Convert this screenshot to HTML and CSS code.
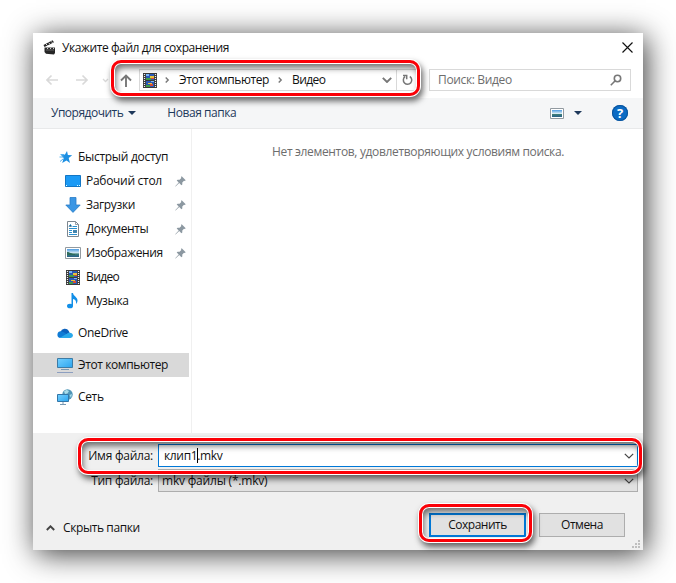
FILE: index.html
```html
<!DOCTYPE html>
<html lang="ru">
<head>
<meta charset="utf-8">
<title>Укажите файл для сохранения</title>
<link rel="stylesheet" href="styles.css">
</head>
<body>
<svg width="0" height="0" class="defs">
  <defs>
    <linearGradient id="sky" x1="0" y1="0" x2="0" y2="1"><stop offset="0" stop-color="#4b9ae0"/><stop offset=".5" stop-color="#d9ecf5"/><stop offset=".6" stop-color="#3f7f76"/><stop offset="1" stop-color="#27608a"/></linearGradient>
    <linearGradient id="screen" x1="0" y1="0" x2="1" y2="1"><stop offset="0" stop-color="#74d0ff"/><stop offset="1" stop-color="#2ba4ee"/></linearGradient>
    <symbol id="film" viewBox="0 0 14 15"><path fill="#3b3b3b" d="M0 0h14v15H0z"/><path stroke="#f2f2f2" stroke-width="1.2" stroke-dasharray="1 1" d="M1.500 1v14M12.500 1v14"/><path fill="#2a59b8" d="M3 1h8v6H3zM3 8h8v6H3z"/><path fill="#e9c13a" d="M7 3h4v2H7zM5 10h4v1H5z"/><path fill="#d94b30" d="M8 5h3v1H8zM7 11h3v2H7z"/><path fill="#3f9b49" d="M3 5h5v2H3zM3 12h4v2H3z"/><path fill="#7bb6f3" d="M3 1h3v2H3zM8 8h3v1H8z"/></symbol>
    <symbol id="photo" viewBox="0 0 16 12"><path fill="#fff" stroke="#929aa0" d="M.5.5h15v11H.5z"/><path fill="url(#sky)" d="M2 2h12v8H2z"/><path fill="#2f6c5b" d="M2 5c3 0 4 2 8 2v1H2z"/></symbol>
    <symbol id="pin" viewBox="0 0 11 11"><path fill="#8c98a1" d="M6.700.3 10.700 4.300 9.800 5 9 4.700 7.300 6.500 7.300 8.400 6.400 9.300 4.200 7.100.6 10.600.2 10.300 3.700 6.600 1.700 4.500 2.600 3.700 4.600 3.700 6.300 2 6 1.100z"/></symbol>
  </defs>
</svg>
<main class="dialog">
  <header class="title">
    <svg class="clap" viewBox="0 0 13 15"><path fill="#262626" d="M1.500 7.500H12V13l-1 1.500-8-.8L1.500 12zM.5 5 9.500.2l1.500 2L1.500 7z"/><path stroke="#ddd" d="m3 4 1.500 1.500M5.500 2.700 7 4.200M8 1.300l1.500 1.500M5 7.700l-.7 1.300M8 7.700 7.300 9M11 7.700l-.7 1.300"/><path stroke="#666" d="M3 10h8"/></svg>
    <h1 class="t-title">Укажите файл для сохранения</h1>
    <svg class="close" viewBox="0 0 11 11"><path fill="none" stroke="#111" stroke-width="1.150" d="m.5.5 10 10m0-10-10 10"/></svg>
  </header>
  <nav class="nav">
    <svg class="arrows" viewBox="0 0 70 12"><path fill="none" stroke="#d9d9d9" stroke-width="1.700" d="M12 6H1m4.500-4.500L1 6l4.500 4.500M30 6h11m-4.500-4.500L41 6l-4.500 4.500"/><path fill="none" stroke="#d9d9d9" stroke-width="1.300" d="m57 5 2.500 2.500L62 5"/></svg>
    <svg class="up" viewBox="0 0 12 13"><path fill="none" stroke="#777" stroke-width="1.900" d="M6 13V2M1 6.500l5-5 5 5"/></svg>
    <div class="address">
      <svg class="film"><use href="#film"/></svg>
      <svg class="chev c1" viewBox="0 0 4 6"><path d="m.7.5 2.500 2.500L.7 5.500"/></svg>
      <span class="t-pc">Этот компьютер</span>
      <svg class="chev c2" viewBox="0 0 4 6"><path d="m.7.5 2.500 2.500L.7 5.500"/></svg>
      <span class="t-video">Видео</span>
      <svg class="drop" viewBox="0 0 10 6"><path d="m.8.8 4.200 4.200L9.200.8"/></svg>
      <span class="refresh"><svg viewBox="0 0 11 12"><path fill="none" stroke="#777" stroke-width="1.500" d="M7.800 2.500A4.200 4.200 0 1 1 3 2.700M1 1.500h3.700v3.700"/></svg></span>
    </div>
    <div class="search"><span class="t-search">Поиск: Видео</span>
      <svg viewBox="0 0 12 12"><circle cx="7.500" cy="4.500" r="3.200"/><path d="M5.200 6.800.8 11.200"/></svg>
    </div>
  </nav>
  <div class="toolbar">
    <span class="t-org">Упорядочить</span><i class="tri"></i>
    <span class="t-new">Новая папка</span>
    <svg class="view" viewBox="0 0 14 11"><path fill="#fff" stroke="#929aa0" d="M.5.5h13v10H.5z"/><path fill="url(#sky)" d="M2 2h10v7H2z"/></svg><i class="tri t2"></i>
    <b class="help">?</b>
  </div>
  <section class="content">
    <ul class="tree">
      <li><svg class="ic" viewBox="0 0 16 16"><path fill="#1c8fe2" d="M10 2l.9 4.100 4.300.2-3.500 2.700 1.300 5L9.500 11.500 5.200 14.100l1.500-5-2.700-2.900 3.700-.1z"/><path stroke="#55b2f0" d="M3.500 5.500h4M2.500 8h4M3 12.500 6 10"/></svg><span class="t-quick">Быстрый доступ</span></li>
      <li class="sub"><svg class="ic" viewBox="0 0 16 16"><path fill="#1b9af5" stroke="#1376c4" d="M.5 2.500h15v11H.5z"/><path stroke="#dff" stroke-dasharray="1 10 1 1" d="M1 12.500h14"/></svg><span class="t-desk">Рабочий стол</span><svg class="pin"><use href="#pin"/></svg></li>
      <li class="sub"><svg class="ic" viewBox="0 0 16 16"><path fill="#3a96e4" stroke="#287cc6" stroke-width=".8" d="M5 .5h6v7.500h4.200L8 15.400.8 8H5z"/></svg><span class="t-down">Загрузки</span><svg class="pin"><use href="#pin"/></svg></li>
      <li class="sub"><svg class="ic" viewBox="0 0 16 16"><path fill="#fff" stroke="#7d8790" d="M2.500.5h8l3 3v12h-11z"/><path fill="none" stroke="#7d8790" stroke-width=".8" d="M10.500.5v3h3"/><path stroke="#2a90cf" d="M7.500 5.500H12M4 7.500h8M4 9.500h3M4 11.500h3M4 13.500h8M4 5.500l1.500-2 1 2"/><path fill="#4385ae" d="M8 9h4v3H8z"/></svg><span class="t-docs">Документы</span><svg class="pin"><use href="#pin"/></svg></li>
      <li class="sub"><svg class="ic pic"><use href="#photo"/></svg><span class="t-img">Изображения</span><svg class="pin"><use href="#pin"/></svg></li>
      <li class="sub"><svg class="ic vid"><use href="#film"/></svg><span class="t-vid2">Видео</span></li>
      <li class="sub"><svg class="ic" viewBox="0 0 16 16"><ellipse cx="5" cy="13" rx="3" ry="2.300" fill="#128fe8"/><path fill="#128fe8" d="M6.500 0H8c.2 3 4.500 4 4.500 7.500 0 1.500-.6 2.500-1.500 3.500.6-3-.8-4.500-3-5v7H6.500z"/></svg><span class="t-music">Музыка</span></li>
      <li class="gap"><svg class="ic" viewBox="0 0 16 16"><path fill="#0c62bd" d="M3.500 7a4.500 4.500 0 0 1 8.300-1L13 9l-8 2z"/><path fill="#0f7bd5" d="M3.800 6.300c3 .2 5 2.500 7.500 4.200L3 13A3.400 3.400 0 0 1 3.800 6.300z"/><path fill="#29a8ea" d="M2.500 13 11 8c2.500-1 5 .3 5 2.600A2.600 2.600 0 0 1 13.300 13z"/></svg><span class="t-one">OneDrive</span></li>
      <li class="gap sel"><svg class="ic" viewBox="0 0 16 16"><path fill="url(#screen)" stroke="#3d7ba5" d="M.5 1.500h15v9H.5z"/><path stroke="#7898b2" d="M4 12.500h8"/><path stroke="#8d9fc0" d="M0 15.500h16"/></svg><span class="t-pc2">Этот компьютер</span></li>
      <li class="gap"><svg class="ic" viewBox="0 0 16 16"><circle cx="10.500" cy="5.500" r="5.200" fill="#4f95b7"/><path fill="#a9dcea" d="M7 2.500 9.500.7 12 2l-1.500 2.500L8 5zM12.500 6l2.500-1-1 4z"/><path fill="url(#screen)" stroke="#3276a8" d="M.5 5.500h11v7H.5z"/><path stroke="#7898b2" d="M3 15.500h6M6 13v2"/></svg><span class="t-net">Сеть</span></li>
    </ul>
    <p class="empty"><span class="t-empty">Нет элементов, удовлетворяющих условиям поиска.</span></p>
  </section>
  <footer class="foot">
    <div class="row name"><label class="t-name">Имя файла:</label><div class="field"><span class="t-file">клип1<i class="caret"></i>.mkv</span><svg viewBox="0 0 10 6"><path d="m.8.800 4.200 4.200L9.200.8"/></svg></div></div>
    <div class="row type"><label class="t-type">Тип файла:</label><div class="field"><span class="t-mkv">mkv файлы (*.mkv)</span><svg viewBox="0 0 10 6"><path d="m.8.800 4.200 4.200L9.200.8"/></svg></div></div>
    <div class="actions">
      <svg class="hide" viewBox="0 0 9 6"><path fill="none" stroke="#444" stroke-width="1.900" d="m.8 5 3.700-3.700L8.200 5"/></svg><span class="t-hide">Скрыть папки</span>
      <button class="save"><span class="t-save">Сохранить</span></button><button class="cancel"><span class="t-cancel">Отмена</span></button>
    </div>
    <svg class="grip" viewBox="0 0 8 8"><path fill="#bfbfbf" d="M6 0h2v2H6zM3 3h2v2H3zM6 3h2v2H6zM0 6h2v2H0zM3 6h2v2H3zM6 6h2v2H6z"/></svg>
  </footer>
</main>
<div class="ring r1"></div><div class="ring r2"></div><div class="ring r3"></div>
</body>
</html>
```
FILE: styles.css
```css
* { box-sizing: border-box; }
body { margin: 0; padding: 33px; width: 676px; height: 583px; overflow: hidden; position: relative; background: #fff; font: 12px/16px "Open Sans", "Noto Sans", sans-serif; letter-spacing: -.35px; color: #111; }
.defs { position: absolute; }
svg { display: block; flex: none; }
span, label { white-space: nowrap; }
.dialog { width: 610px; height: 517px; background: #fff; display: flex; flex-direction: column; box-shadow: 3px 4px 28px rgba(0,0,0,.78); }
.title { height: 29px; display: flex; align-items: center; padding: 0 10px; }
.title h1 { margin: 0 auto 0 6px; font-size: 12px; font-weight: 400; white-space: nowrap; letter-spacing: -.41px; }
.clap { width: 13px; height: 15px; }
.close { width: 11px; height: 11px; }
.nav { height: 36px; display: flex; align-items: center; padding: 0 12px 0 13px; }
.arrows { width: 70px; height: 12px; }
.up { width: 12px; height: 13px; margin-left: 4px; }
.address { margin-left: 7px; width: 279px; height: 22px; border: 1px solid #d9d9d9; display: flex; align-items: center; padding-left: 3px; }
.film { width: 14px; height: 15px; }
.chev { width: 4px; height: 6px; overflow: visible; }
.chev path, .drop path { fill: none; stroke: #777; stroke-width: 1.4; }
.c1 { margin: 0 10px 0 8px; }
.c2 { margin: 0 10px 0 9px; }
.t-pc, .t-pc2 { letter-spacing: -.4px; }
.t-video, .t-vid2 { letter-spacing: -.6px; }
.drop { width: 10px; height: 6px; margin-left: auto; }
.drop path { stroke-width: 1.9; }
.refresh { width: 21px; height: 20px; margin-left: 4px; border-left: 1px solid #d9d9d9; display: flex; align-items: center; padding-left: 5px; }
.refresh svg { width: 11px; height: 12px; }
.search { margin-left: auto; width: 202px; height: 22px; border: 1px solid #d9d9d9; display: flex; align-items: center; justify-content: space-between; padding: 0 8px; color: #6d6d6d; }
.search svg { width: 12px; height: 12px; fill: none; stroke: #777; stroke-width: 1.6; }
.toolbar { height: 31px; background: #f5f6f7; border-bottom: 1px solid #e8e9ea; display: flex; align-items: center; padding: 0 15px 0 18px; color: #1e395b; }
.tri { border: 4px solid transparent; border-top-color: #1e395b; border-bottom: 0; margin-left: 5px; }
.t-org { letter-spacing: -.5px; }
.t-new { margin: 0 auto 0 31px; letter-spacing: -.45px; }
.view { width: 14px; height: 11px; }
.t2 { margin: 0 30px 0 10px; }
.help { width: 16px; height: 16px; border-radius: 50%; background: #0b6bc4; box-shadow: inset 0 0 0 1px #0a549c; color: #fff; text-align: center; font-size: 13px; line-height: 16px; }
.content { height: 304px; display: flex; }
.tree { list-style: none; margin: 0; padding: 16px 0 0; width: 159px; border-right: 1px solid #f0f0f0; }
.tree li { height: 24px; display: flex; align-items: center; padding-left: 24px; width: 156px; }
.tree .sub { padding-left: 32px; }
.tree .gap { margin-top: 8px; }
.tree .sel { background: #d9d9d9; }
.t-quick, .t-desk { letter-spacing: -.29px; }
.ic { width: 16px; height: 16px; margin-right: 5px; }
.pic { height: 12px; }
.vid { width: 14px; height: 15px; margin: 0 6px 0 1px; }
.pin { width: 11px; height: 11px; margin-left: auto; margin-right: 3px; }
.empty { margin: 15px 0 0; padding-left: 80px; color: #6d6d6d; letter-spacing: -.34px; }
.foot { flex: 1; background: #f0f0f0; position: relative; padding-top: 11px; }
.row { display: flex; align-items: center; padding-right: 5px; }
.row label { width: 120px; text-align: right; margin-right: 5px; letter-spacing: -.25px; }
.t-mkv { letter-spacing: -.2px; }
.field { flex: 1; height: 23px; display: flex; align-items: center; justify-content: space-between; padding: 0 3px 0 5px; border: 1px solid #0078d7; background: #fff; }
.type { margin-top: 2px; }
.type .field { border-color: #adadad; background: #e1e1e1; padding-left: 3px; }
.field svg { width: 10px; height: 6px; fill: none; stroke: #444; stroke-width: 1.2; }
.caret { display: inline-block; width: 1px; height: 15px; background: #000; margin-right: -1px; vertical-align: -3px; }
.actions { display: flex; align-items: center; height: 24px; margin-top: 21px; padding: 0 18px 0 13px; }
.hide { width: 9px; height: 6px; margin-right: 8px; }
.t-hide { margin-right: auto; position: relative; top: 3px; letter-spacing: -.4px; }
.hide { position: relative; top: 3px; }
button { height: 24px; padding: 0; background: #e1e1e1; border: 1px solid #adadad; font: inherit; letter-spacing: -.5px; color: #111; }
.save { width: 97px; border: 2px solid #0078d7; margin-right: 13px; }
.cancel { width: 86px; }
.grip { position: absolute; right: 3px; bottom: 2px; width: 8px; height: 8px; }
.ring { position: absolute; border: 3px solid #fb0007; border-radius: 10px; box-shadow: 0 0 0 1px #fff, inset 0 0 0 1px #fff, 2px 4px 6px 1px rgba(0,0,0,.6), inset 2px 5px 6px rgba(0,0,0,.55); }
.r1 { left: 111px; top: 60px; width: 309px; height: 36px; }
.r2 { left: 78px; top: 438px; width: 564px; height: 36px; }
.r3 { left: 419px; top: 504px; width: 113px; height: 38px; }
```
